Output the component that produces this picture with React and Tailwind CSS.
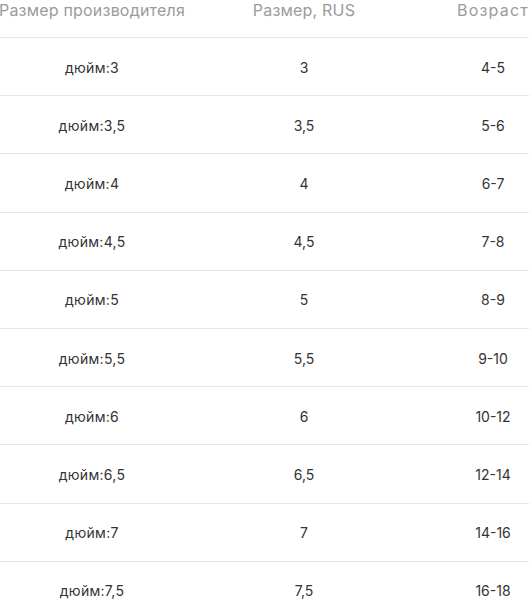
export default function App() {
  const rows = [
    ["дюйм:3", "3", "4-5"],
    ["дюйм:3,5", "3,5", "5-6"],
    ["дюйм:4", "4", "6-7"],
    ["дюйм:4,5", "4,5", "7-8"],
    ["дюйм:5", "5", "8-9"],
    ["дюйм:5,5", "5,5", "9-10"],
    ["дюйм:6", "6", "10-12"],
    ["дюйм:6,5", "6,5", "12-14"],
    ["дюйм:7", "7", "14-16"],
    ["дюйм:7,5", "7,5", "16-18"],
  ];
  return (
    <div className="w-[529px] h-[600px] overflow-hidden bg-white" style={{ fontFamily: "Inter, 'Noto Sans', sans-serif" }}>
      <div className="ml-[-14px] w-[590px]">
        <div className="grid grid-cols-[212px_212px_166px] h-[38px] border-b border-[#e6e6e6] text-[16px] leading-[20px] text-[#9b9b9b] tracking-[0.2px]">
          <div className="text-center">Размер производителя</div>
          <div className="text-center">Размер, RUS</div>
          <div className="text-center tracking-[1.2px]">Возраст</div>
        </div>
        {rows.map((r, i) => (
          <div key={i} className="grid grid-cols-[212px_212px_166px] h-[58.2px] pt-[1px] items-center border-b border-[#e6e6e6] text-[14px] text-[#333]">
            <div className="text-center tracking-[0.3px]">{r[0]}</div>
            <div className="text-center">{r[1]}</div>
            <div className="text-center">{r[2]}</div>
          </div>
        ))}
      </div>
    </div>
  );
}
